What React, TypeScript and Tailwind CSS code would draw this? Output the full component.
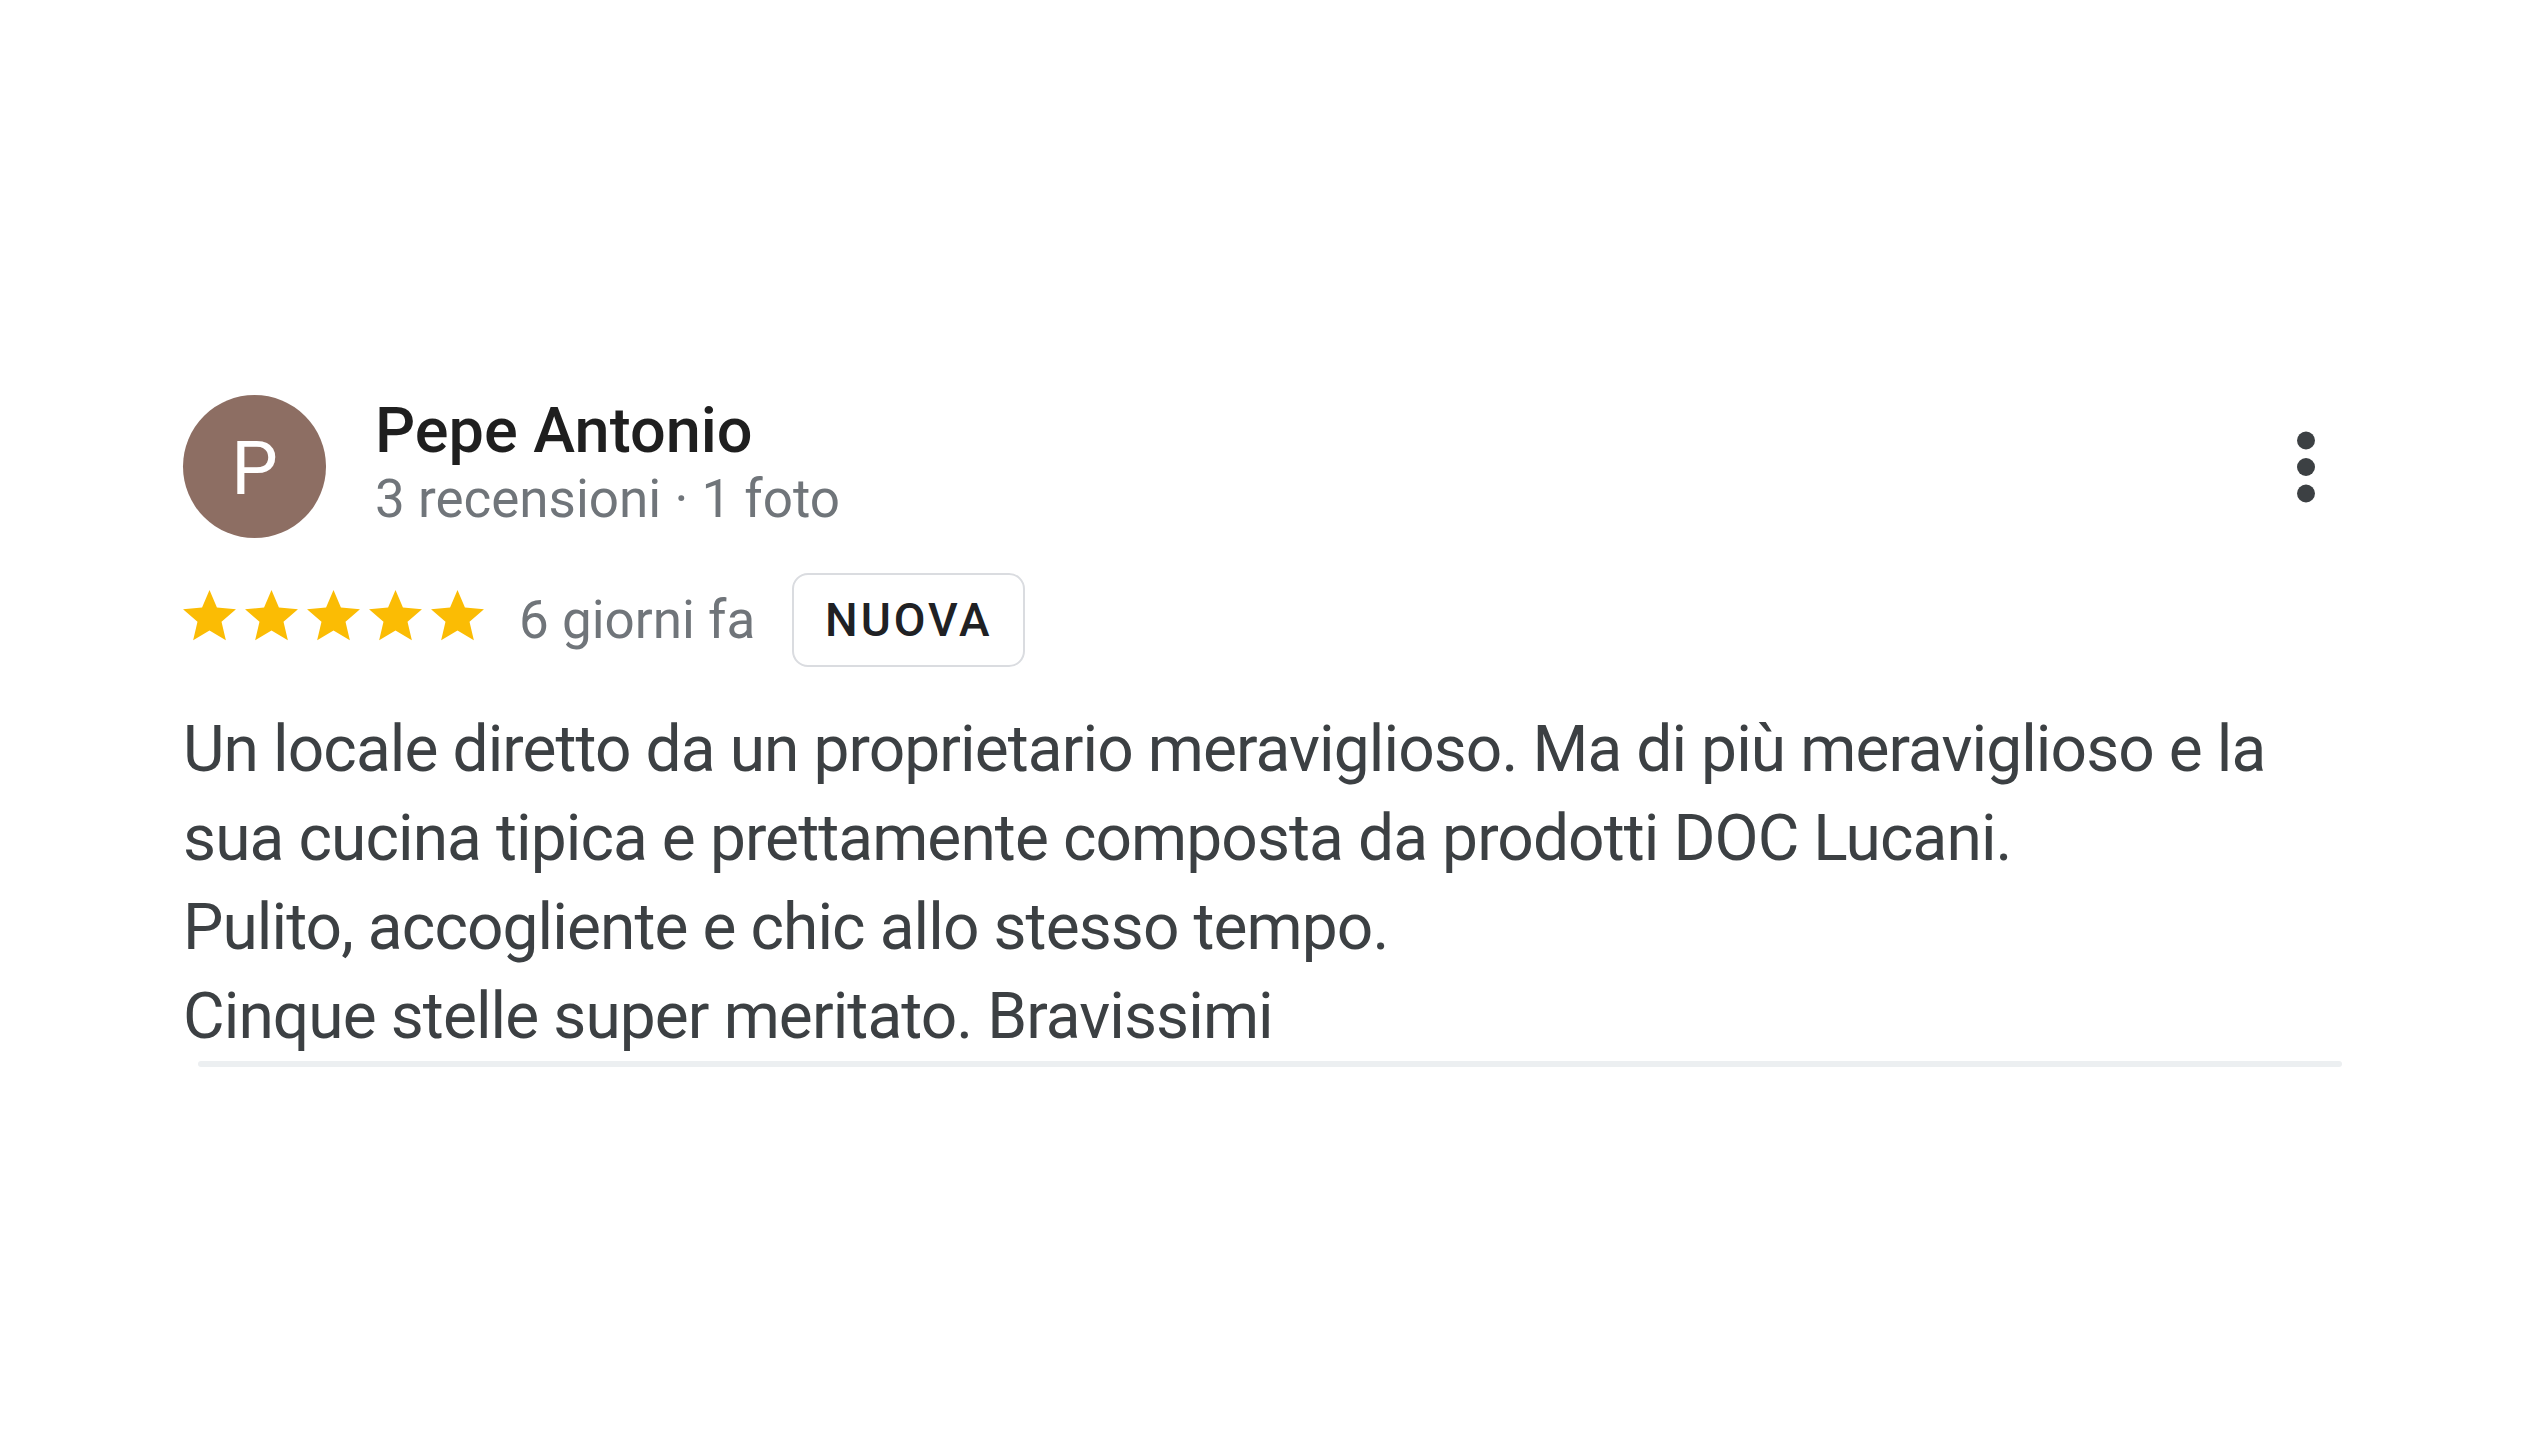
import React from 'react';

const FONT = { fontFamily: "Roboto, 'Liberation Sans', sans-serif" };

const REVIEW =
  'Un locale diretto da un proprietario meraviglioso. Ma di più meraviglioso e la sua cucina tipica e prettamente composta da prodotti DOC Lucani.\nPulito, accogliente e chic allo stesso tempo.\nCinque stelle super meritato. Bravissimi';

function Star() {
  return (
    <svg width="53" height="51" viewBox="2 2 20 19.27" className="block">
      <path
        fill="#fbbc04"
        d="M12 17.27L18.18 21l-1.64-7.03L22 9.24l-7.19-.61L12 2 9.19 8.63 2 9.24l5.46 4.73L5.82 21z"
      />
    </svg>
  );
}

function MoreIcon() {
  return (
    <svg width="24" height="72" viewBox="0 0 24 72" className="block">
      <circle cx="12" cy="9.5" r="9" fill="#3c4043" />
      <circle cx="12" cy="36" r="9" fill="#3c4043" />
      <circle cx="12" cy="62.5" r="9" fill="#3c4043" />
    </svg>
  );
}

export default function App() {
  return (
    <div className="min-h-screen w-full bg-white pl-[183px] pr-[190px] pt-[395px]" style={FONT}>
      {/* intestazione recensore */}
      <div className="flex items-start">
        <div className="flex h-[143px] w-[143px] shrink-0 items-center justify-center rounded-full bg-[#8d6e63] pt-[5px] text-[74px] leading-none text-white">
          P
        </div>
        <div className="ml-[49px]">
          <div className="text-[63px] font-medium leading-[72px] text-[#1f1f1f]">Pepe Antonio</div>
          <div className="text-[53px] leading-[64px] text-[#70757a]">3 recensioni · 1 foto</div>
        </div>
        <button className="ml-auto mr-[24px] self-center">
          <MoreIcon />
        </button>
      </div>

      {/* stelle + data + badge */}
      <div className="mt-[35px] flex h-[94px] items-center">
        <div className="mb-[9px] flex gap-[9px]">
          <Star />
          <Star />
          <Star />
          <Star />
          <Star />
        </div>
        <span className="ml-[35px] text-[53px] leading-[64px] text-[#70757a]">6 giorni fa</span>
        <span className="ml-[37px] flex h-[94px] w-[233px] items-center justify-center rounded-[16px] border-2 border-[#dadce0] text-[46px] font-medium leading-none tracking-[3px] text-[#202124]">
          NUOVA
        </span>
      </div>

      {/* testo recensione */}
      <p className="mt-[38px] whitespace-pre-line text-[64px] leading-[89px] tracking-[-0.9px] text-[#3c4043]">
        {REVIEW}
      </p>

      <div className="ml-[15px] h-[6px] rounded-full bg-[#eceff1]" />
    </div>
  );
}
